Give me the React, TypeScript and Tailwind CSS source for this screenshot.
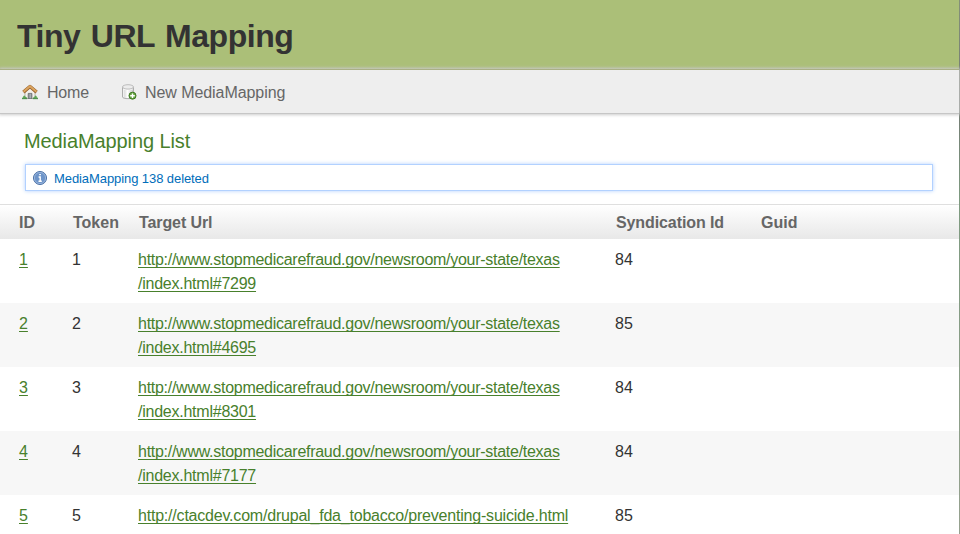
type Line = { text: string; tracking: string };
type Mapping = { id: number; url: Line[]; syndication: number };

const texas: Line = {
  text: 'http://www.stopmedicarefraud.gov/newsroom/your-state/texas',
  tracking: 'tracking-[-0.273px]',
};
const index = (hash: string): Line => ({ text: `/index.html#${hash}`, tracking: 'tracking-[-0.24px]' });

const mappings: Mapping[] = [
  { id: 1, url: [texas, index('7299')], syndication: 84 },
  { id: 2, url: [texas, index('4695')], syndication: 85 },
  { id: 3, url: [texas, index('8301')], syndication: 84 },
  { id: 4, url: [texas, index('7177')], syndication: 84 },
  {
    id: 5,
    url: [{ text: 'http://ctacdev.com/drupal_fda_tobacco/preventing-suicide.html', tracking: 'tracking-[-0.205px]' }],
    syndication: 85,
  },
];

const columns = 'grid grid-cols-[54px_66px_477px_146px_1fr] pl-[18px]';
const link = 'text-[#48802c] underline decoration-1 underline-offset-[2px] [text-decoration-skip-ink:none]';

function HouseIcon() {
  return (
    <svg width="16" height="16" viewBox="0 0 16 16" className="shrink-0">
      <path d="M3 8 8 3.2 13 8v6.5H3z" fill="#f3f0ec" stroke="#aaa49c" strokeWidth=".8" />
      <path d="M6.2 14.5V9.4h3.7v5.1z" fill="#8b8f94" stroke="#66696d" strokeWidth=".8" />
      <path d="M8.2 9.8v4.5" stroke="#b9bcbf" strokeWidth="1" />
      <path d="M1.4 8.1 8 2.5l6.6 5.6" fill="none" stroke="#98622d" strokeWidth="3.4" strokeLinejoin="round" />
      <path d="M1.5 7.7 8 2.2l6.5 5.5" fill="none" stroke="#dba45f" strokeWidth="2.1" strokeLinejoin="round" />
      <path d="M0 14.7v-1l1-.3.4-1.5 1.2-.3 1.1 1.5 1.3.3v1.3zM11 14.7v-1.1l1.2-.4 1-1.6 1.3.4.4 1.4 1.1.3v1z" fill="#5da454" />
      <path d="M0 14.7h5.2M10.8 14.7H16" stroke="#37803b" strokeWidth=".8" />
    </svg>
  );
}

function DatabaseAddIcon() {
  return (
    <svg width="16" height="16" viewBox="0 0 16 16" className="shrink-0">
      <defs>
        <linearGradient id="drum">
          <stop offset="0" stopColor="#fff" />
          <stop offset=".2" stopColor="#dedede" />
          <stop offset=".45" stopColor="#fff" />
          <stop offset=".6" stopColor="#eee" />
          <stop offset="1" stopColor="#c4c4c4" />
        </linearGradient>
      </defs>
      <path d="M1.5 3v10C1.5 15.2 12.5 15.2 12.5 13V3" fill="url(#drum)" stroke="#adadad" />
      <path d="M2 4.5C3 6.2 11 6.2 12 4.5" fill="none" stroke="#fff" />
      <ellipse cx="7" cy="2.9" rx="5.5" ry="2.2" fill="#ececec" stroke="#bcbcbc" />
      <circle cx="11.5" cy="11.7" r="3.5" fill="#68a544" stroke="#3d7920" />
      <path d="M11.5 9.4v4.6M9.2 11.7h4.6" stroke="#fff" strokeWidth="1.4" />
    </svg>
  );
}

function InfoIcon() {
  return (
    <svg width="16" height="16" viewBox="0 0 16 16" className="shrink-0">
      <circle cx="8" cy="8" r="6.5" fill="#6d94c9" stroke="#496fa5" />
      <circle cx="8" cy="8" r="5.6" fill="none" stroke="#a3bddf" strokeWidth=".8" />
      <path d="M7.2 4.6h1.7M6.6 7h1.6v4M6.5 11.2h3.3" fill="none" stroke="#fff" strokeWidth="1.4" />
    </svg>
  );
}

export default function App() {
  return (
    <div className="flex h-[534px] w-[960px] overflow-hidden bg-white font-['Liberation_Sans',Arial,sans-serif] text-base leading-6 text-[#333]">
      <div className="w-[959px]">
        <header className="h-[69px] bg-[linear-gradient(#abbf78_65px,#a8b87a)] pt-4 pl-[17px]">
          <h1 className="text-[32px] leading-10 font-bold tracking-[-0.46px] whitespace-nowrap [word-spacing:2px]">Tiny URL Mapping</h1>
        </header>
        <nav className="relative flex h-[45px] items-center border-t border-b border-t-[#aab086] border-b-[#c6c6c6] bg-[#eee] pl-[22px] text-[#666] shadow-[0_0_3px_1px_#ccc]">
          <HouseIcon />
          <span className="ml-[9px] w-[74px] pt-[2px] tracking-[-0.2px]">Home</span>
          <DatabaseAddIcon />
          <span className="ml-2 pt-[2px] tracking-[-0.07px]">New MediaMapping</span>
        </nav>
        <main>
          <h2 className="mt-[15px] ml-6 text-[20px] leading-6 tracking-[-0.1px] text-[#48802c]">MediaMapping List</h2>
          <div className="mt-[11px] ml-[25px] flex h-[27px] w-[908px] items-center border border-[#b2d1ff] pl-[6px] text-[13px] text-[#006dba] shadow-[0_0_4px_#b2d1ff]">
            <InfoIcon />
            <span className="ml-[6px] pt-[2px] tracking-[-0.08px]">MediaMapping 138 deleted</span>
          </div>
          <div className={`${columns} mt-[13px] h-[35px] border-t border-[#dfdfdf] bg-linear-to-b from-white to-[#e8e8e8] pt-[6px] font-bold text-[#666]`}>
            <span className="pl-px">ID</span>
            <span className="pl-px">Token</span>
            <span className="pl-px tracking-[-0.1px]">Target Url</span>
            <span className="pl-px tracking-[-0.1px]">Syndication Id</span>
            <span>Guid</span>
          </div>
          <div>
            {mappings.map((m) => (
              <div key={m.id} className={`${columns} h-16 pt-[9px] odd:bg-white even:bg-[#f7f7f7]`}>
                <span className="pl-px">
                  <a className={link}>{m.id}</a>
                </span>
                <span>{m.id}</span>
                <div>
                  {m.url.map((line) => (
                    <div key={line.text}>
                      <a className={`${link} ${line.tracking}`}>{line.text}</a>
                    </div>
                  ))}
                </div>
                <span>{m.syndication}</span>
              </div>
            ))}
          </div>
        </main>
      </div>
      <div className="w-px bg-[linear-gradient(#849078,#737973_100px,#7e9a80_200px,#96a18f)]" />
    </div>
  );
}
